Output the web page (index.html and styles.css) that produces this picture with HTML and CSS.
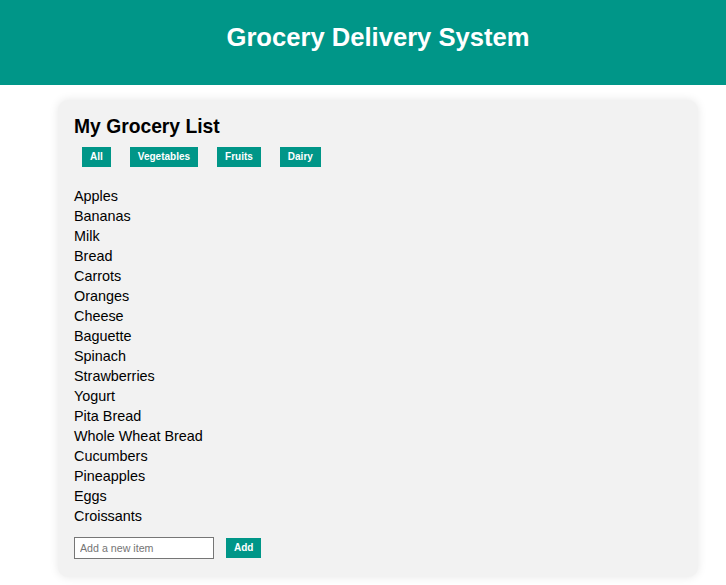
FILE: index.html
```html
<!DOCTYPE html>
<html lang="en">
<head>
<meta charset="utf-8">
<title>Grocery Delivery System</title>
<link rel="stylesheet" href="styles.css">
</head>
<body>
<header class="site-header">
  <h1 class="site-title">Grocery Delivery System</h1>
</header>
<main class="main">
  <section class="card">
    <h2 class="card-title">My Grocery List</h2>
    <div class="filters">
      <button class="btn">All</button>
      <button class="btn">Vegetables</button>
      <button class="btn">Fruits</button>
      <button class="btn">Dairy</button>
    </div>
    <ul class="items">
      <li>Apples</li>
      <li>Bananas</li>
      <li>Milk</li>
      <li>Bread</li>
      <li>Carrots</li>
      <li>Oranges</li>
      <li>Cheese</li>
      <li>Baguette</li>
      <li>Spinach</li>
      <li>Strawberries</li>
      <li>Yogurt</li>
      <li>Pita Bread</li>
      <li>Whole Wheat Bread</li>
      <li>Cucumbers</li>
      <li>Pineapples</li>
      <li>Eggs</li>
      <li>Croissants</li>
    </ul>
    <div class="add-row">
      <input class="add-input" type="text" placeholder="Add a new item">
      <button class="btn">Add</button>
    </div>
  </section>
</main>
</body>
</html>
```

FILE: styles.css
```css
html, body {
  margin: 0;
  padding: 0;
  background: #ffffff;
  font-family: "Liberation Sans", Arial, sans-serif;
  color: #000;
}

.site-header {
  background: #009688;
  padding: 22px 0 33px 30px;
  text-align: center;
}

.site-title {
  margin: 0;
  font-size: 25.6px;
  line-height: 30px;
  font-weight: bold;
  color: #ffffff;
}

.main {
  padding: 15px 0 8px 58px;
}

.card {
  width: 608px;
  background: #f2f2f2;
  border-radius: 10px;
  box-shadow: 0 0 10px rgba(0, 0, 0, 0.1);
  padding: 16px 16px 18px;
}

.card-title {
  margin: 0;
  font-size: 19.3px;
  line-height: 22px;
  font-weight: bold;
}

.filters {
  display: flex;
  gap: 19px;
  margin: 9px 0 0 8px;
}

.btn {
  background: #009688;
  color: #ffffff;
  border: none;
  border-radius: 0;
  padding: 4px 8px;
  font-family: "Liberation Sans", Arial, sans-serif;
  font-size: 10px;
  line-height: 12px;
  font-weight: bold;
}

.items {
  list-style: none;
  margin: 19px 0 0;
  padding: 0;
  font-size: 14.4px;
  line-height: 20px;
}

.add-row {
  display: flex;
  align-items: center;
  gap: 12px;
  margin-top: 11px;
}

.add-input {
  box-sizing: border-box;
  width: 140px;
  height: 22px;
  padding: 4px 5px;
  border: 1px solid #767676;
  background: #ffffff;
  font-family: "Liberation Sans", Arial, sans-serif;
  font-size: 10.67px;
  margin: 0;
}

.add-input::placeholder {
  color: #757575;
}
```
